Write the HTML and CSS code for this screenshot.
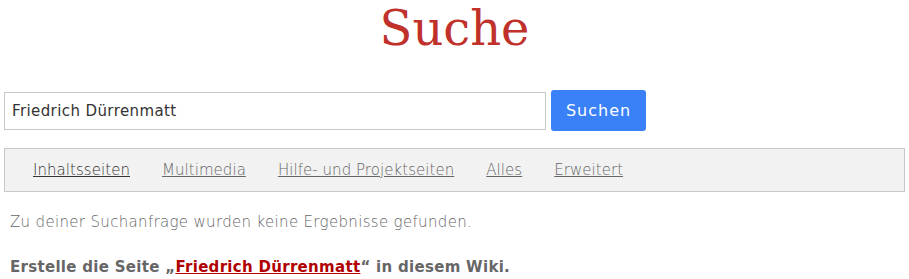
FILE: index.html
```html
<!DOCTYPE html>
<html lang="de">
<head>
    <meta charset="UTF-8">
    <title>Suche</title>
    <link rel="stylesheet" href="styles.css">
</head>
<body>
    <h1 class="title">Suche</h1>

    <form class="search-form">
        <input class="search-input" type="text" value="Friedrich Dürrenmatt">
        <button class="search-btn" type="button">Suchen</button>
    </form>

    <div class="tabs">
        <a href="#" class="tab active">Inhaltsseiten</a>
        <a href="#" class="tab">Multimedia</a>
        <a href="#" class="tab">Hilfe- und Projektseiten</a>
        <a href="#" class="tab">Alles</a>
        <a href="#" class="tab">Erweitert</a>
    </div>

    <p class="no-results">Zu deiner Suchanfrage wurden keine Ergebnisse gefunden.</p>
    <p class="create">Erstelle die Seite „<a href="#" class="new-page">Friedrich Dürrenmatt</a>“ in diesem Wiki.</p>
</body>
</html>
```

FILE: styles.css
```css
body {
    margin: 0;
    padding: 0 4px;
    font-family: "DejaVu Sans", sans-serif;
    color: #555;
    background: white;
}
.title {
    font-family: "DejaVu Serif", serif;
    font-weight: normal;
    font-size: 48px;
    color: #c0312b;
    text-align: center;
    margin: 0;
    line-height: 56px;
}
.search-form {
    display: flex;
    align-items: center;
    gap: 5px;
    margin-top: 34px;
}
.search-input {
    width: 542px;
    height: 38px;
    box-sizing: border-box;
    border: 1px solid #c8c8c8;
    padding: 0 7px;
    font-family: "DejaVu Sans", sans-serif;
    font-size: 15px;
    letter-spacing: 0.4px;
    color: #333;
}
.search-btn {
    width: 95px;
    height: 41px;
    background: #3a80f7;
    color: white;
    border: none;
    border-radius: 3px;
    font-family: "DejaVu Sans", sans-serif;
    font-size: 16px;
    letter-spacing: 1px;
    cursor: pointer;
}
.tabs {
    display: flex;
    gap: 32px;
    margin-top: 17px;
    height: 44px;
    box-sizing: border-box;
    align-items: center;
    padding-left: 28px;
    background: #f2f2f2;
    border: 1px solid #c8c8c8;
}
.tab {
    font-size: 15px;
    font-weight: 200;
    letter-spacing: 0.05px;
    color: #666;
}
.tab.active {
    color: #333;
}
.no-results {
    font-size: 15px;
    font-weight: 200;
    letter-spacing: 0.33px;
    color: #666;
    margin: 21px 0 0 6px;
}
.create {
    font-size: 15px;
    font-weight: bold;
    letter-spacing: 0.3px;
    color: #666;
    margin: 27px 0 0 6px;
}
.new-page {
    color: #b00000;
}
```
